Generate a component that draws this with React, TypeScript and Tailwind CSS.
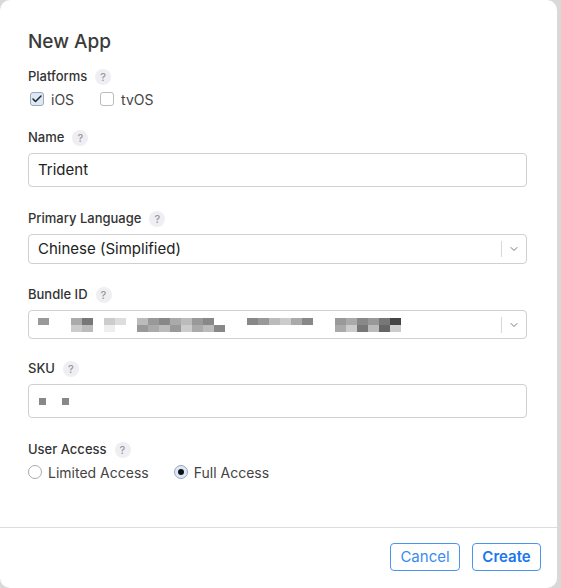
import { Check, ChevronDown } from "lucide-react";

const font = { fontFamily: 'Inter, "Liberation Sans", Arial, sans-serif' };

const Help = () => (
  <span className="ml-2 inline-flex h-4 w-4 items-center justify-center rounded-full bg-[#efeff3] text-[11px] leading-none text-[#9a9aa0]">
    ?
  </span>
);

const Label = ({ text, className = "" }: { text: string; className?: string }) => (
  <div className={`flex h-[18px] items-center text-[13px] font-medium text-[#333] ${className}`}>
    {text}
    <Help />
  </div>
);

// pixelated blur over the bundle id, top row / bottom row shades
const bundleTop = ["#999", "", "", "#aaa", "#777", "", "#ccc", "#ddd", "", "#bbb", "#999", "#888", "#aaa", "#bbb", "#999", "#888", "", "", "", "#888", "#999", "#bbb", "#ccc", "#aaa", "#888", "", "", "#999", "#aaa", "#888", "#999", "#777", "#444"];
const bundleBot = ["", "", "", "#ccc", "#bbb", "", "#eee", "", "", "#999", "#aaa", "#bbb", "#999", "#ccc", "#aaa", "#bbb", "#888", "", "", "", "", "", "", "", "", "", "", "#aaa", "#ccc", "#777", "#bbb", "#666", "#ccc"];

const SelectBox = ({ children, h }: { children: React.ReactNode; h: string }) => (
  <div className={`mt-[6px] flex ${h} items-center rounded-[4px] border border-[#d0d0d0] bg-white`}>
    <div className="flex-1 overflow-hidden pl-[9px] text-[15px] text-[#222]">{children}</div>
    <div className="h-4 w-px bg-[#d8d8d8]" />
    <div className="flex w-[24px] justify-center">
      <ChevronDown className="h-3 w-3 text-[#777]" strokeWidth={2} />
    </div>
  </div>
);

export default function App() {
  return (
    <div className="h-[588px] w-[561px] overflow-hidden bg-[#d9d9d9]" style={font}>
      <div className="flex h-[588px] w-[557px] flex-col rounded-[10px] bg-white">
        <div className="h-[527px] pl-[28px] pr-[30px] pt-[30px]">
          <h1 className="h-6 text-[19px] font-medium leading-6 text-[#3a3a3a]">New App</h1>

          <Label text="Platforms" className="mt-[14px]" />
          <div className="mt-[3px] flex h-5 items-center text-[14px] text-[#444]">
            <span className="ml-[2px] flex h-[14px] w-[14px] items-center justify-center rounded-[3px] border border-[#9aa8b8] bg-[#dce8f7]">
              <Check className="h-3 w-3 text-[#222]" strokeWidth={3} />
            </span>
            <span className="ml-[7px]">iOS</span>
            <span className="ml-[26px] h-[14px] w-[14px] rounded-[3px] border border-[#bbb] bg-white" />
            <span className="ml-[7px]">tvOS</span>
          </div>

          <Label text="Name" className="mt-[20px]" />
          <div className="mt-[6px] flex h-[34px] items-center rounded-[4px] border border-[#d0d0d0] pl-[9px] text-[15px] text-[#222]">
            Trident
          </div>

          <Label text="Primary Language" className="mt-[23px]" />
          <SelectBox h="h-[30px]">Chinese (Simplified)</SelectBox>

          <Label text="Bundle ID" className="mt-[22px]" />
          <SelectBox h="h-[29px]">
            <div className="flex flex-col">
              <div className="flex">
                {bundleTop.map((c, i) => (
                  <span key={i} className="h-[7px] w-[11px]" style={{ background: c || "transparent" }} />
                ))}
              </div>
              <div className="flex">
                {bundleBot.map((c, i) => (
                  <span key={i} className="h-[7px] w-[11px]" style={{ background: c || "transparent" }} />
                ))}
              </div>
            </div>
          </SelectBox>

          <Label text="SKU" className="mt-[21px]" />
          <div className="mt-[6px] flex h-[34px] items-center gap-[16px] rounded-[4px] border border-[#d0d0d0] pl-[10px]">
            <span className="h-[7px] w-[7px] bg-[#888]" />
            <span className="h-[7px] w-[7px] bg-[#888]" />
          </div>

          <Label text="User Access" className="mt-[23px]" />
          <div className="mt-[3px] flex h-5 items-center text-[14px] text-[#444]">
            <span className="h-[14px] w-[14px] rounded-full border border-[#aaa] bg-white" />
            <span className="ml-[6px]">Limited Access</span>
            <span className="ml-[25px] flex h-[14px] w-[14px] items-center justify-center rounded-full border border-[#9aa8b8] bg-[#dce8f7]">
              <span className="h-[6px] w-[6px] rounded-full bg-[#111]" />
            </span>
            <span className="ml-[6px]">Full Access</span>
          </div>
        </div>

        <div className="flex justify-end gap-3 border-t border-[#dcdcdc] pr-4 pt-[15px]">
          <button className="h-[28px] w-[70px] rounded-[4px] border border-[#4a94f2] text-[15px] text-[#3a8bf0]">
            Cancel
          </button>
          <button className="h-[28px] w-[69px] rounded-[4px] border border-[#4a94f2] text-[15px] font-semibold text-[#1a77ee]">
            Create
          </button>
        </div>
      </div>
    </div>
  );
}
